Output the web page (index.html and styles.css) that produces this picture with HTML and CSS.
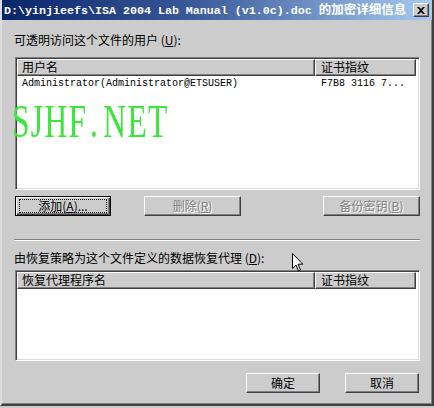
FILE: index.html
```html
<!DOCTYPE html>
<html lang="zh-CN">
<head>
<meta charset="utf-8">
<title>加密详细信息</title>
<link rel="stylesheet" href="styles.css">
</head>
<body>
<div class="window">
  <div class="titlebar">
    <span class="title"><span class="title-latin">D:\yinjieefs\ISA 2004 Lab Manual (v1.0c).doc</span><span class="title-cjk">的加密详细信息</span></span>
    <span class="close">
      <svg width="8" height="7" viewBox="0 0 8 7"><path d="M0 0h2l2 2 2-2h2L5 3.5 8 7H6L4 5 2 7H0l3-3.5z" fill="#000"/></svg>
    </span>
  </div>
  <div class="content">
    <div class="label label-1">可透明访问这个文件的用户 (<u>U</u>):</div>
    <div class="list list-1">
      <div class="list-head">
        <div class="hcell hcell-name">用户名</div>
        <div class="hcell hcell-cert">证书指纹</div>
      </div>
      <div class="list-row">
        <span class="cell-name">Administrator(Administrator@ETSUSER)</span>
        <span class="cell-cert">F7B8 3116 7...</span>
      </div>
    </div>
    <div class="btn-row">
      <button class="btn btn-default"><span class="focus">添加(<u>A</u>)...</span></button>
      <button class="btn btn-delete" disabled>删除(<u>R</u>)</button>
      <button class="btn btn-backup" disabled>备份密钥(<u>B</u>)</button>
    </div>
    <div class="separator"></div>
    <div class="label label-2">由恢复策略为这个文件定义的数据恢复代理 (<u>D</u>):</div>
    <div class="list list-2">
      <div class="list-head">
        <div class="hcell hcell-name">恢复代理程序名</div>
        <div class="hcell hcell-cert">证书指纹</div>
      </div>
    </div>
    <div class="footer">
      <button class="btn btn-small">确定</button>
      <button class="btn btn-small">取消</button>
    </div>
  </div>
  <div class="watermark">SJHF<span class="dot">.</span>NET</div>
  <svg class="cursor" width="12" height="19" viewBox="0 0 12 19">
    <path d="M0.5 0.5 L0.5 15.5 L4 12 L6.5 18 L8.5 17.2 L6 11.2 L10.8 11.2 Z" fill="#fff" stroke="#000" stroke-width="1" stroke-linejoin="miter"/>
  </svg>
</div>
</body>
</html>
```

FILE: styles.css
```css
* { box-sizing: border-box; }

html, body {
  margin: 0;
  padding: 0;
  background: #cccccc;
}

body {
  width: 434px;
  height: 408px;
  overflow: hidden;
  font-family: "Noto Sans CJK SC", "Liberation Sans", sans-serif;
  font-size: 12px;
  color: #000;
}

.window {
  position: relative;
  width: 434px;
  height: 406px;
  background: #cccccc;
  border-left: 2px solid #dcdcdc;
  border-right: 2px solid #404040;
  border-bottom: 2px solid #404040;
  box-shadow: inset -1px -1px 0 #808080;
}

.titlebar {
  height: 20px;
  display: flex;
  align-items: center;
  justify-content: space-between;
  padding: 0 3px 0 2px;
  background: linear-gradient(to right, #0a246a 0%, #3a5a9a 45%, #a6caf0 100%);
  color: #fff;
  white-space: nowrap;
}

.title {
  display: flex;
  align-items: baseline;
  font-weight: bold;
  line-height: 20px;
}

.title-latin {
  font-family: "Liberation Mono", monospace;
  font-size: 11.67px;
  padding-top: 1px;
}

.title-cjk {
  font-family: "Noto Sans CJK SC", sans-serif;
  font-size: 12.5px;
  margin-left: 7px;
}

.close {
  width: 16px;
  height: 14px;
  display: flex;
  align-items: center;
  justify-content: center;
  background: #cccccc;
  border-top: 1px solid #fff;
  border-left: 1px solid #fff;
  border-right: 1px solid #404040;
  border-bottom: 1px solid #404040;
  box-shadow: inset -1px -1px 0 #808080;
}

.content {
  padding: 0 12px 0 13px;
}

.label {
  line-height: 14px;
  white-space: nowrap;
  margin-left: -1px;
}

.label u { text-decoration: underline; }

.label-1 { margin-top: 13px; }

.list {
  background: #fff;
  border-top: 1px solid #808080;
  border-left: 1px solid #808080;
  border-right: 1px solid #fff;
  border-bottom: 1px solid #fff;
  box-shadow: inset 1px 1px 0 #404040, inset -1px -1px 0 #dcdcdc;
  padding: 1px 2px 1px 1px;
}

.list-1 {
  margin-top: 10px;
  height: 133px;
}

.list-2 {
  margin-top: 5px;
  height: 91px;
}

.list-head {
  display: flex;
  height: 17px;
}

.hcell {
  background: #cccccc;
  border-top: 1px solid #fff;
  border-left: 1px solid #fff;
  border-right: 1px solid #404040;
  border-bottom: 1px solid #404040;
  box-shadow: inset -1px -1px 0 #808080;
  line-height: 14px;
  padding-left: 4px;
  white-space: nowrap;
}

.hcell-name { width: 298px; }
.hcell-cert { width: 101px; padding-left: 5px; }

.list-row {
  display: flex;
  font-family: "Liberation Mono", monospace;
  font-size: 10px;
  line-height: 14px;
  height: 14px;
  margin-top: 1px;
  white-space: nowrap;
}

.cell-name {
  width: 298px;
  padding-left: 5px;
}

.cell-cert {
  padding-left: 6px;
}

.btn {
  font-family: "Noto Sans CJK SC", "Liberation Sans", sans-serif;
  font-size: 12px;
  line-height: 14px;
  height: 20px;
  padding: 0;
  margin: 0;
  color: #000;
  background: #cccccc;
  border-top: 1px solid #fff;
  border-left: 1px solid #fff;
  border-right: 1px solid #404040;
  border-bottom: 1px solid #404040;
  box-shadow: inset -1px -1px 0 #808080;
  display: flex;
  align-items: center;
  justify-content: center;
  white-space: nowrap;
}

.btn:disabled {
  color: #808080;
  text-shadow: 1px 1px 0 #fff;
}

.btn-row {
  display: flex;
  margin-top: 6px;
}

.btn-default {
  width: 96px;
  border: 1px solid #000;
  box-shadow: inset 1px 1px 0 #fff, inset -1px -1px 0 #404040, inset -2px -2px 0 #808080;
  padding: 2px 3px;
}

.focus {
  flex: 1;
  align-self: stretch;
  display: flex;
  align-items: center;
  justify-content: center;
  border: 1px dotted #000;
}

.btn-delete {
  width: 97px;
  margin-left: 33px;
}

.btn-backup {
  width: 97px;
  margin-left: auto;
}

.separator {
  margin-top: 23px;
  margin-left: -1px;
  height: 2px;
  border-top: 1px solid #808080;
  border-bottom: 1px solid #fff;
}

.label-2 { margin-top: 10px; }

.footer {
  display: flex;
  justify-content: flex-end;
  gap: 25px;
  margin-top: 12px;
  padding-right: 1px;
}

.btn-small {
  width: 74px;
}

.watermark {
  position: absolute;
  left: 10px;
  top: 98px;
  font-family: "Liberation Serif", serif;
  font-size: 47px;
  line-height: 47px;
  letter-spacing: 2px;
  color: #3ce63c;
  transform: scaleX(0.67);
  transform-origin: left top;
  white-space: nowrap;
}

.dot {
  padding: 0 6px 0 4px;
}

.cursor {
  position: absolute;
  left: 290px;
  top: 253px;
}
```
